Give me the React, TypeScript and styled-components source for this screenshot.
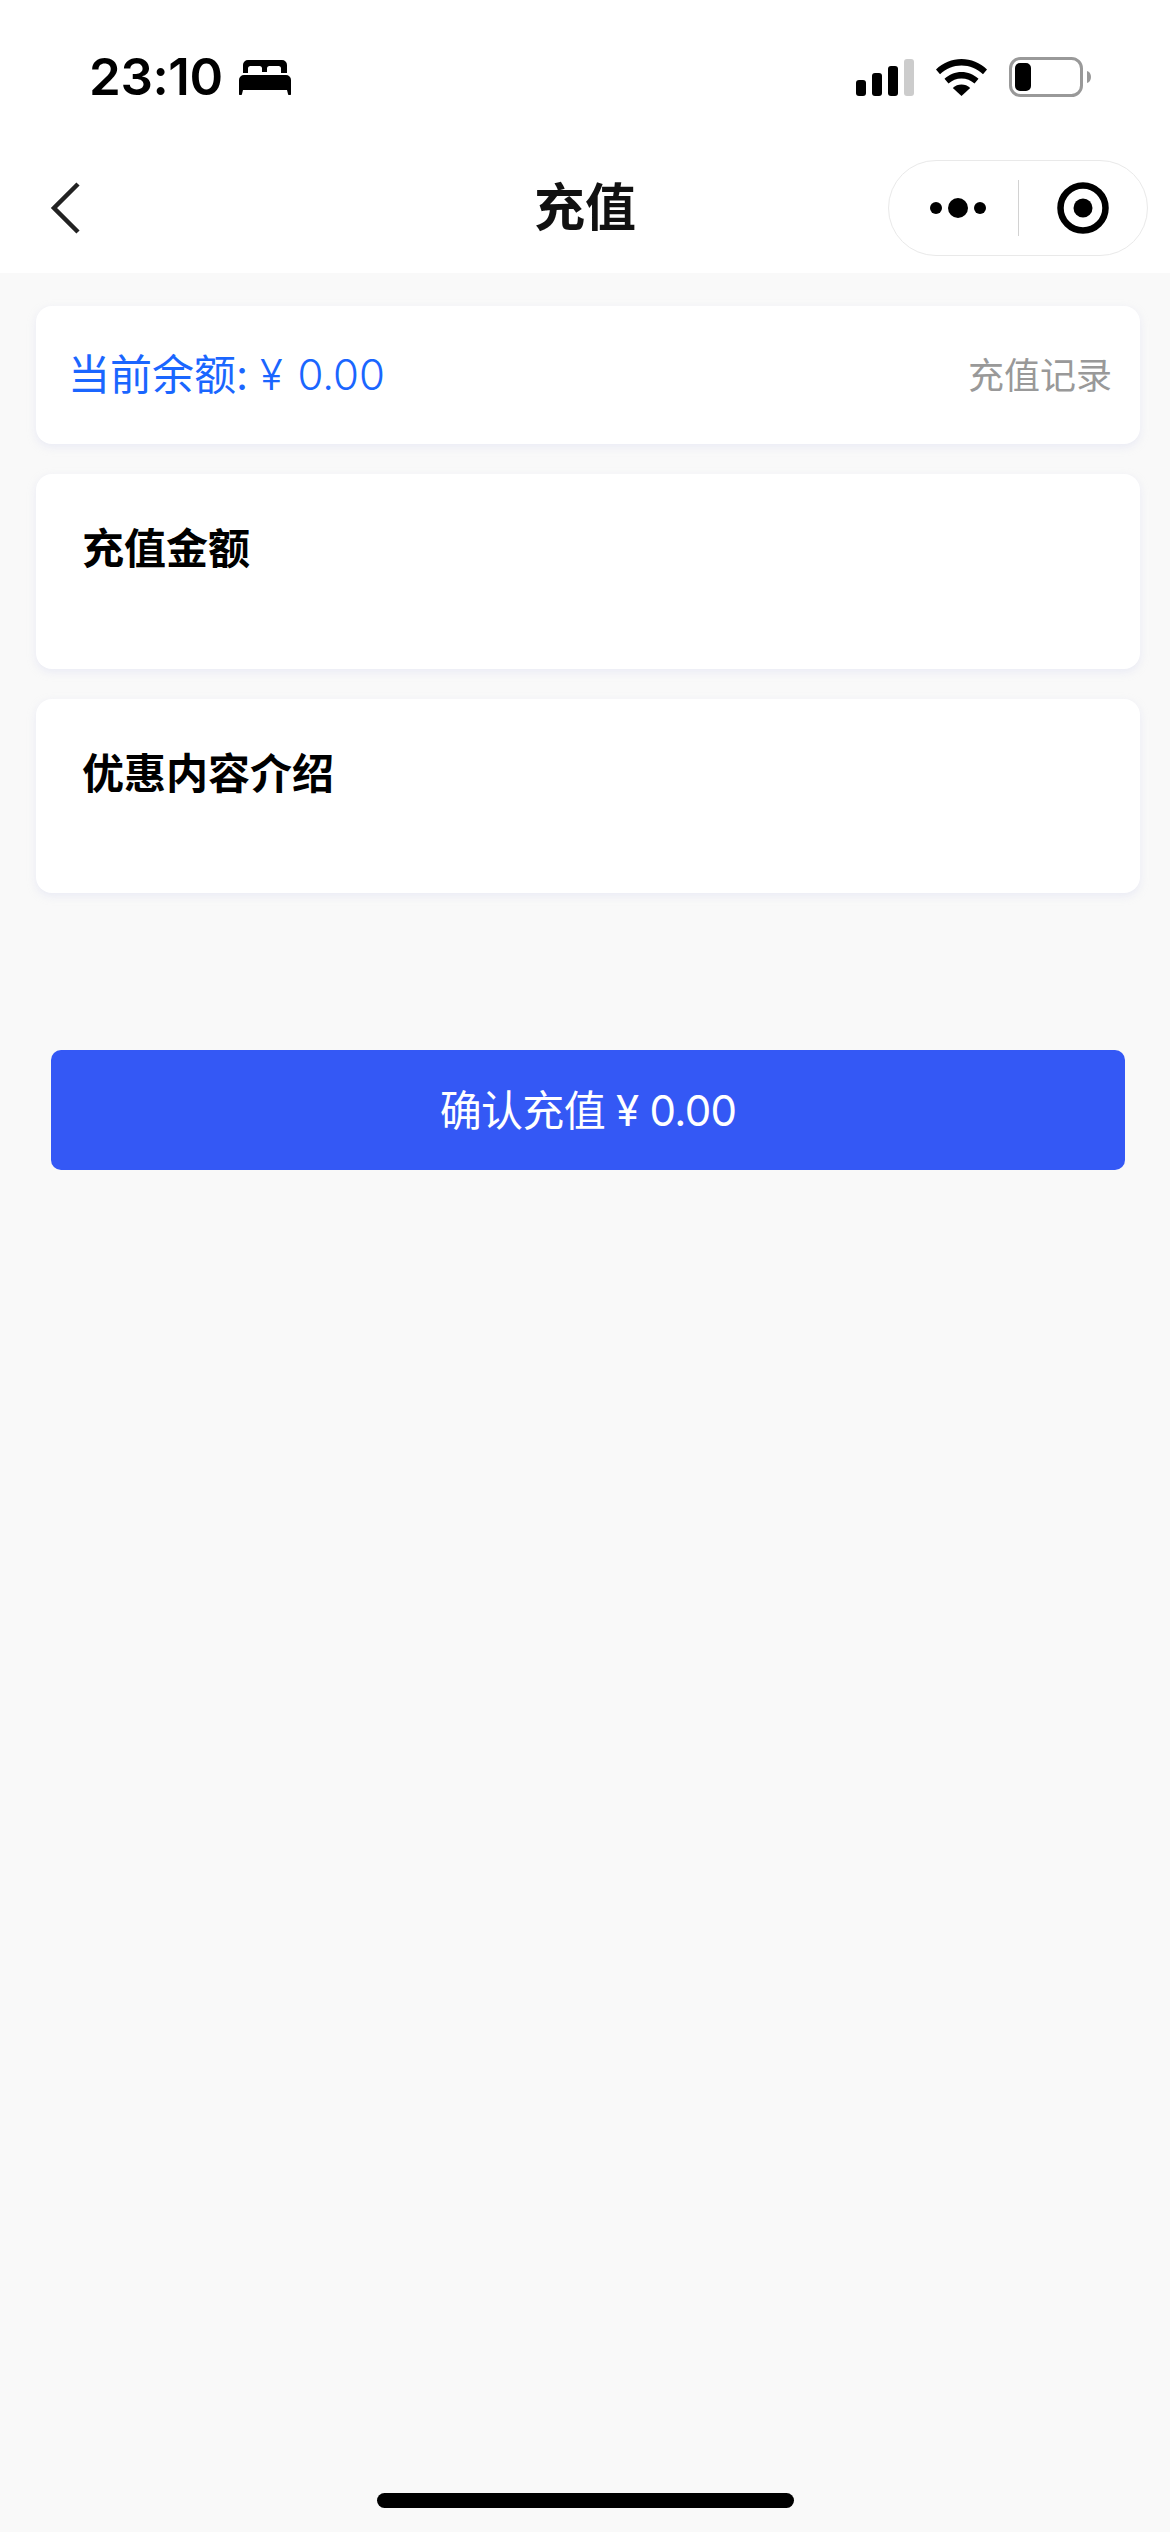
import styled, { createGlobalStyle } from 'styled-components';

const GlobalStyle = createGlobalStyle`
  html, body {
    margin: 0;
    padding: 0;
    background: #f9f9f9;
    font-family: Inter, "Noto Sans CJK SC", sans-serif;
  }
`;

const Page = styled.div`
  width: 1170px;
  height: 2532px;
  display: flex;
  flex-direction: column;
  overflow: hidden;
`;

const Header = styled.header`
  height: 273px;
  background: #fff;
  flex-shrink: 0;
`;

const StatusBar = styled.div`
  height: 142px;
  padding: 54px 79px 0 89px;
  box-sizing: border-box;
  display: flex;
  justify-content: space-between;
  align-items: flex-start;
`;

const TimeGroup = styled.div`
  display: flex;
  align-items: center;
  height: 46px;
  gap: 16px;
`;

const Time = styled.span`
  font-size: 51px;
  line-height: 46px;
  font-weight: 600;
  color: #000;
  letter-spacing: -0.4px;
`;

const StatusIcons = styled.div`
  display: flex;
  align-items: center;
  height: 46px;
  gap: 22px;
`;

const NavBar = styled.nav`
  height: 131px;
  display: grid;
  grid-template-columns: 1fr auto 1fr;
  align-items: center;
  padding: 0 22px 0 50px;
  box-sizing: border-box;
`;

const BackButton = styled.button`
  width: 32px;
  height: 52px;
  padding: 0;
  border: 0;
  background: none;
  display: flex;
  justify-self: start;
`;

const Title = styled.h1`
  margin: 0 0 0 -28px;
  font-size: 51px;
  line-height: 60px;
  font-weight: 700;
  color: #111;
`;

const Capsule = styled.div`
  justify-self: end;
  width: 260px;
  height: 96px;
  box-sizing: border-box;
  border: 1.5px solid #e9e9e9;
  border-radius: 48px;
  background: #fff;
  display: flex;
  align-items: center;
`;

const CapsuleSide = styled.div<{ $width: number; $shift?: number }>`
  flex: 0 0 ${(p) => p.$width}px;
  box-sizing: border-box;
  display: flex;
  align-items: center;
  justify-content: center;
  padding-left: ${(p) => p.$shift ?? 0}px;
`;

const CapsuleDivider = styled.div`
  width: 1px;
  height: 56px;
  background: #d2d2d2;
`;

const Content = styled.main`
  flex: 1;
  display: flex;
  flex-direction: column;
  gap: 30px;
  padding: 33px 30px 0 36px;
`;

const Card = styled.section<{ $height: number }>`
  height: ${(p) => p.$height}px;
  box-sizing: border-box;
  background: #fff;
  border-radius: 16px;
  box-shadow: 0 3px 8px rgba(226, 228, 242, 0.7);
`;

const BalanceRow = styled(Card)`
  display: flex;
  justify-content: space-between;
  align-items: center;
  padding: 0 28px 0 32px;
`;

const Balance = styled.span`
  font-size: 42px;
  line-height: 60px;
  color: #1a66ff;
`;

const BalanceAmount = styled.span`
  font-weight: 300;
  word-spacing: 3px;
`;

const RecordLink = styled.a`
  font-size: 36px;
  line-height: 60px;
  margin-top: 2px;
  color: #999;
`;

const SectionCard = styled(Card)`
  padding: 45px 46px 0;
`;

const SectionTitle = styled.h2`
  margin: 0;
  font-size: 42px;
  line-height: 60px;
  font-weight: 700;
  color: #000;
`;

const ConfirmButton = styled.button`
  height: 120px;
  margin: 127px 15px 0;
  padding: 0 0 6px;
  border: 0;
  border-radius: 10px;
  background: #3458f5;
  color: #fff;
  font-family: inherit;
  font-size: 42px;
  font-weight: 400;
  letter-spacing: -0.7px;
`;

const HomeBar = styled.div`
  width: 417px;
  height: 15px;
  margin: 0 auto 24px;
  flex-shrink: 0;
  border-radius: 8px;
  background: #000;
`;

function BedIcon() {
  return (
    <svg width="52" height="35" viewBox="0 0 52 35">
      <path
        fill="#000"
        d="M9 0h34a5 5 0 0 1 5 5v8h-6V8.500a2.500 2.500 0 0 0-2.500-2.500h-9a2.500 2.500 0 0 0-2.500 2.500V12h-5V8.500A2.500 2.500 0 0 0 20.500 6h-9A2.500 2.500 0 0 0 9 8.500V13H4V5a5 5 0 0 1 5-5z"
      />
      <path
        fill="#000"
        d="M5 15h42a5 5 0 0 1 5 5v13.500a1.500 1.500 0 0 1-3 .5l-1-4H4l-1 4a1.500 1.500 0 0 1-3-.5V20a5 5 0 0 1 5-5z"
      />
    </svg>
  );
}

function SignalIcon() {
  return (
    <svg width="58" height="37" viewBox="0 0 58 37">
      <rect x="0" y="21" width="10" height="16" rx="3" fill="#000" />
      <rect x="16" y="14" width="10" height="23" rx="3" fill="#000" />
      <rect x="32" y="7" width="10" height="30" rx="3" fill="#000" />
      <rect x="48" y="0" width="10" height="37" rx="3" fill="#ccc" />
    </svg>
  );
}

function WifiIcon() {
  return (
    <svg width="51" height="37" viewBox="0 0 51 37">
      <path
        fill="#000"
        d="M25.500 0C35 0 44 3.700 51 10.500l-4 4.800C41 9.600 33.500 6.500 25.500 6.500S10 9.600 4 15.300l-4-4.800C7 3.700 16 0 25.500 0z"
      />
      <path
        fill="#000"
        d="M25.500 13c6.300 0 12.300 2.400 17 6.800l-4 4.800c-3.500-3.300-8.100-5.100-13-5.100s-9.500 1.800-13 5.100l-4-4.800c4.700-4.400 10.700-6.800 17-6.800z"
      />
      <path
        fill="#000"
        d="M25.500 25.500c3.200 0 6.300 1.200 8.700 3.400L25.500 37l-8.700-8.100c2.400-2.200 5.500-3.400 8.700-3.400z"
      />
    </svg>
  );
}

function BatteryIcon() {
  return (
    <svg width="82" height="40" viewBox="0 0 82 40">
      <rect x="1.500" y="1.500" width="71" height="37" rx="10" fill="none" stroke="#999" strokeWidth="3" />
      <rect x="6" y="6" width="16" height="28" rx="5" fill="#000" />
      <path d="M78 14c2.500 .6 4 3 4 6s-1.500 5.400-4 6z" fill="#999" />
    </svg>
  );
}

function BackIcon() {
  return (
    <svg width="32" height="52" viewBox="0 0 32 52">
      <path d="M28 2 4 26l24 24" fill="none" stroke="#222" strokeWidth="4.500" strokeLinejoin="miter" />
    </svg>
  );
}

function MoreIcon() {
  return (
    <svg width="56" height="20" viewBox="0 0 56 20">
      <circle cx="6" cy="10" r="6" fill="#000" />
      <circle cx="28" cy="10" r="10" fill="#000" />
      <circle cx="50" cy="10" r="6" fill="#000" />
    </svg>
  );
}

function TargetIcon() {
  return (
    <svg width="52" height="52" viewBox="0 0 52 52">
      <circle cx="26" cy="26" r="22.500" fill="none" stroke="#000" strokeWidth="6.500" />
      <circle cx="26" cy="26" r="9.500" fill="#000" />
    </svg>
  );
}

function App() {
  return (
    <Page>
      <GlobalStyle />
      <Header>
        <StatusBar>
          <TimeGroup>
            <Time>23:10</Time>
            <BedIcon />
          </TimeGroup>
          <StatusIcons>
            <SignalIcon />
            <WifiIcon />
            <BatteryIcon />
          </StatusIcons>
        </StatusBar>
        <NavBar>
          <BackButton>
            <BackIcon />
          </BackButton>
          <Title>充值</Title>
          <Capsule>
            <CapsuleSide $width={129} $shift={8}>
              <MoreIcon />
            </CapsuleSide>
            <CapsuleDivider />
            <CapsuleSide $width={127}>
              <TargetIcon />
            </CapsuleSide>
          </Capsule>
        </NavBar>
      </Header>
      <Content>
        <BalanceRow $height={138}>
          <Balance>
            当前余额: <BalanceAmount>¥ 0.00</BalanceAmount>
          </Balance>
          <RecordLink>充值记录</RecordLink>
        </BalanceRow>
        <SectionCard $height={195}>
          <SectionTitle>充值金额</SectionTitle>
        </SectionCard>
        <SectionCard $height={194}>
          <SectionTitle>优惠内容介绍</SectionTitle>
        </SectionCard>
        <ConfirmButton>确认充值 ¥ 0.00</ConfirmButton>
      </Content>
      <HomeBar />
    </Page>
  );
}

export default App;
